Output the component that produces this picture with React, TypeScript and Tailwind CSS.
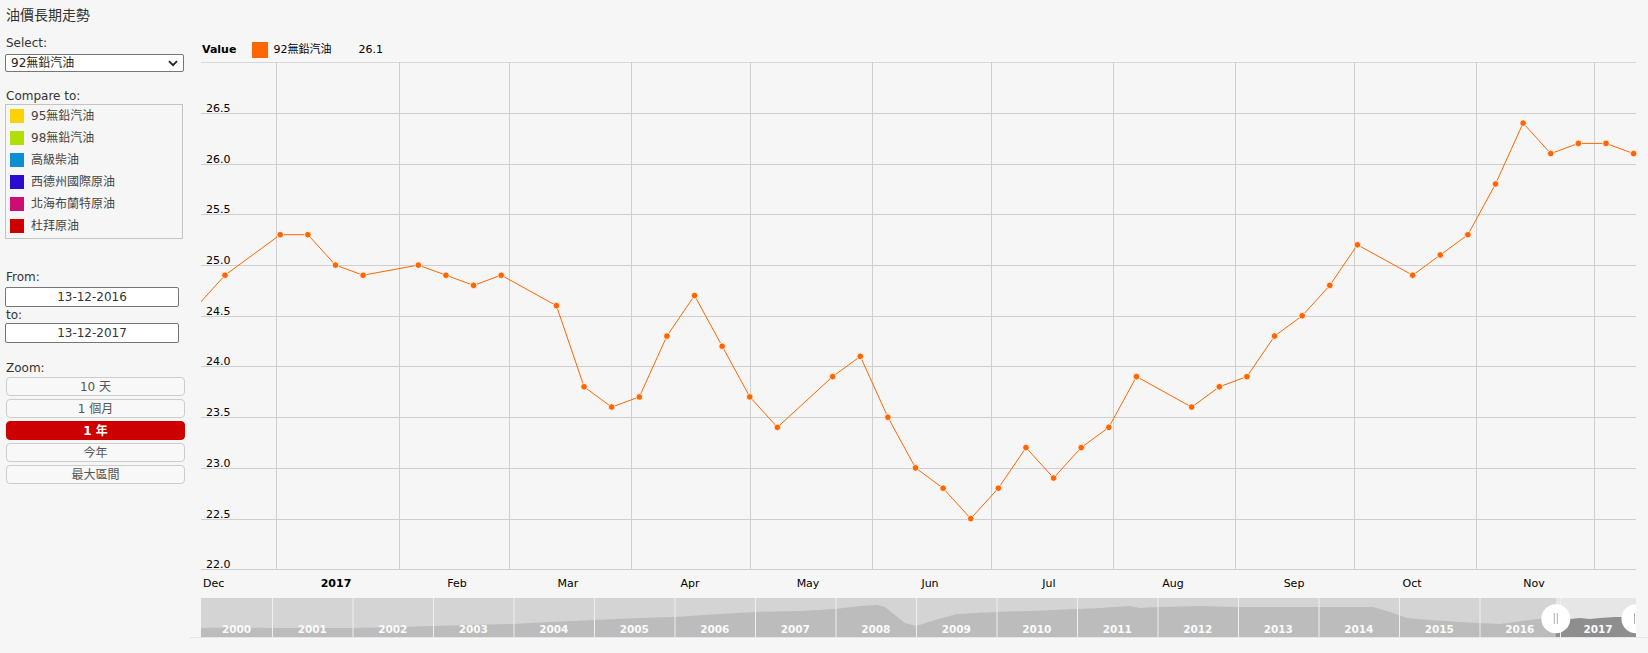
import React from "react";

const pts: [number, number][] = [
  [-1, 24.6], [0, 24.9], [2, 25.3], [3, 25.3], [4, 25.0], [5, 24.9], [7, 25.0], [8, 24.9], [9, 24.8], [10, 24.9],
  [12, 24.6], [13, 23.8], [14, 23.6], [15, 23.7], [16, 24.3], [17, 24.7], [18, 24.2], [19, 23.7], [20, 23.4],
  [22, 23.9], [23, 24.1], [24, 23.5], [25, 23.0], [26, 22.8], [27, 22.5], [28, 22.8], [29, 23.2], [30, 22.9],
  [31, 23.2], [32, 23.4], [33, 23.9], [35, 23.6], [36, 23.8], [37, 23.9], [38, 24.3], [39, 24.5], [40, 24.8],
  [41, 25.2], [43, 24.9], [44, 25.1], [45, 25.3], [46, 25.8], [47, 26.4], [48, 26.1], [49, 26.2], [50, 26.2], [51, 26.1],
];

const PX = (k: number) => 225 + k * 27.62;
const PY = (v: number) => 569.3 - (v - 22) * 101.4;

const gridVals = [22.0, 22.5, 23.0, 23.5, 24.0, 24.5, 25.0, 25.5, 26.0, 26.5];
const monthLines = [276.3, 398.6, 509, 631.4, 749.8, 872, 990.5, 1112.9, 1235.2, 1353.6, 1475.9, 1594.3];
const monthLabels: { t: string; x: number; start?: boolean; bold?: boolean }[] = [
  { t: "Dec", x: 203, start: true },
  { t: "2017", x: 336, bold: true },
  { t: "Feb", x: 457 },
  { t: "Mar", x: 568 },
  { t: "Apr", x: 690 },
  { t: "May", x: 808 },
  { t: "Jun", x: 930 },
  { t: "Jul", x: 1049 },
  { t: "Aug", x: 1173 },
  { t: "Sep", x: 1294 },
  { t: "Oct", x: 1412 },
  { t: "Nov", x: 1534 },
];

const navArea: [number, number][] = [
  [201, 628], [230, 627.5], [272, 628], [320, 628], [352, 628], [400, 627], [433, 626], [470, 625], [513, 624],
  [550, 622], [594, 620], [640, 618], [674, 617], [720, 614], [755, 612], [800, 611], [835, 609], [860, 606],
  [877, 605], [885, 607], [895, 615], [905, 623], [916, 626], [935, 620], [957, 614], [996, 612], [1030, 611],
  [1077, 609], [1100, 608], [1130, 606], [1140, 608], [1157, 607], [1200, 606], [1238, 607], [1280, 607],
  [1318, 607], [1373, 607], [1390, 612], [1407, 618], [1430, 620], [1460, 622], [1479, 623], [1500, 624],
  [1530, 620], [1545, 618], [1560, 617], [1570, 619], [1580, 618], [1590, 619], [1600, 618], [1615, 617], [1636, 617],
];

const years = Array.from({ length: 18 }, (_, i) => 2000 + i);
const yearStart = (i: number) => (i === 0 ? 201 : 272 + (i - 1) * 80.5);
const yearEnd = (i: number) => (i === 17 ? 1636 : 272 + i * 80.5);

const compare = [
  { c: "bg-[#fcd202]", t: "95無鉛汽油" },
  { c: "bg-[#b0de09]", t: "98無鉛汽油" },
  { c: "bg-[#0d8ecf]", t: "高級柴油" },
  { c: "bg-[#2a0cd0]", t: "西德州國際原油" },
  { c: "bg-[#cd0d74]", t: "北海布蘭特原油" },
  { c: "bg-[#cc0000]", t: "杜拜原油" },
];

const zooms = ["10 天", "1 個月", "1 年", "今年", "最大區間"];

function Chart() {
  const line = pts.map(([k, v]) => `${PX(k).toFixed(1)},${PY(v).toFixed(1)}`).join(" ");
  return (
    <svg width={1458} height={536} viewBox="190 62 1458 536" className="block">
      <defs>
        <clipPath id="plotclip">
          <rect x={201} y={62} width={1435} height={508} />
        </clipPath>
      </defs>
      <line x1={201} x2={1636} y1={62.5} y2={62.5} stroke="#d8d8d8" strokeWidth={1} />
      {monthLines.map((x) => (
        <line key={x} x1={Math.round(x) + 0.5} x2={Math.round(x) + 0.5} y1={62} y2={569.5} stroke="#cfcfcf" strokeWidth={1} />
      ))}
      {gridVals.map((v) => (
        <line key={v} x1={201} x2={1636} y1={Math.round(PY(v)) + 0.5} y2={Math.round(PY(v)) + 0.5} stroke="#cfcfcf" strokeWidth={1} />
      ))}
      {gridVals.map((v) => (
        <text key={"l" + v} x={206} y={Math.round(PY(v)) - 1} fontSize={11} fill="#000">
          {v.toFixed(1)}
        </text>
      ))}
      {monthLabels.map((m) => (
        <text
          key={m.t}
          x={m.x}
          y={587}
          fontSize={11}
          fill="#000"
          textAnchor={m.start ? "start" : "middle"}
          fontWeight={m.bold ? "bold" : "normal"}
        >
          {m.t}
        </text>
      ))}
      <g clipPath="url(#plotclip)">
        <polyline points={line} fill="none" stroke="#ff6600" strokeWidth={1} />
      </g>
      {pts
        .filter(([k]) => k >= 0)
        .map(([k, v]) => (
          <circle key={k} cx={PX(k)} cy={PY(v)} r={3.3} fill="#ff6600" stroke="#ffffff" strokeWidth={0.8} />
        ))}
    </svg>
  );
}

function Navigator() {
  const area =
    navArea.map(([x, y], i) => `${i === 0 ? "M" : "L"}${x},${y}`).join(" ") + " L1636,637 L201,637 Z";
  const selX = 1555.8;
  return (
    <svg width={1435} height={39} viewBox="201 598 1435 39" className="block overflow-hidden">
      <defs>
        <clipPath id="selclip">
          <rect x={selX} y={598} width={1636 - selX} height={39} />
        </clipPath>
      </defs>
      <rect x={201} y={598} width={1435} height={39} fill="#d4d4d4" />
      <path d={area} fill="#bcbcbc" />
      <g clipPath="url(#selclip)">
        <rect x={selX} y={598} width={1636 - selX} height={39} fill="#e6e6e6" />
        <path d={area} fill="#8e8e8e" />
      </g>
      {years.slice(1).map((_, i) => (
        <line key={i} x1={yearStart(i + 1) + 0.5} x2={yearStart(i + 1) + 0.5} y1={598} y2={637} stroke="#efefef" strokeWidth={1} />
      ))}
      {years.map((y, i) => (
        <text
          key={y}
          x={(yearStart(i) + yearEnd(i)) / 2}
          y={633}
          fontSize={10.5}
          fontWeight="bold"
          fill="#fafafa"
          textAnchor="middle"
        >
          {y}
        </text>
      ))}
      <circle cx={selX} cy={618.7} r={14.5} fill="#ffffff" />
      <line x1={selX - 1.5} x2={selX - 1.5} y1={613} y2={624} stroke="#b0b0b0" strokeWidth={1} />
      <line x1={selX + 1.5} x2={selX + 1.5} y1={613} y2={624} stroke="#b0b0b0" strokeWidth={1} />
      <circle cx={1636} cy={618.7} r={14.5} fill="#ffffff" />
      <line x1={1634.5} x2={1634.5} y1={613} y2={624} stroke="#b0b0b0" strokeWidth={1} />
    </svg>
  );
}

export default function App() {
  return (
    <div className="flex h-[653px] w-[1648px] overflow-hidden bg-[#f6f6f6] font-['DejaVu_Sans','Noto_Sans_CJK_TC',sans-serif] text-[#333]">
      {/* Left panel */}
      <div className="flex w-[190px] shrink-0 flex-col pl-[5px]">
        <div className="mt-[5px] h-[20px] pl-[1px] text-[14px] leading-[20px] text-[#333]">油價長期走勢</div>
        <div className="mt-[10px] h-[16px] pl-[1px] text-[12px] leading-[16px]">Select:</div>
        <div className="mt-[3px] flex h-[18px] w-[179px] items-center justify-between rounded-[2px] border border-[#767676] bg-white pl-[5px] pr-[5px] text-[12px] text-[#222]">
          <span>92無鉛汽油</span>
          <svg width="10" height="7" viewBox="0 0 10 7">
            <path d="M1 1.2 L5 5.2 L9 1.2" fill="none" stroke="#222" strokeWidth="1.8" />
          </svg>
        </div>
        <div className="mt-[16px] h-[16px] pl-[1px] text-[12px] leading-[16px]">Compare to:</div>
        <div className="flex h-[135px] w-[178px] flex-col border border-[#c4c4c4] pl-[4px]">
          {compare.map((c) => (
            <div key={c.t} className="flex h-[22px] items-center">
              <div className={`h-[14px] w-[14px] ${c.c}`} />
              <span className="ml-[7px] text-[12px] text-[#444]">{c.t}</span>
            </div>
          ))}
        </div>
        <div className="mt-[30px] h-[16px] pl-[1px] text-[12px] leading-[16px]">From:</div>
        <div className="mt-[2px] flex h-[20px] w-[174px] items-center justify-center rounded-[2px] border border-[#767676] bg-white text-[12px] text-[#333]">
          13-12-2016
        </div>
        <div className="h-[16px] pl-[1px] text-[12px] leading-[16px]">to:</div>
        <div className="flex h-[20px] w-[174px] items-center justify-center rounded-[2px] border border-[#767676] bg-white text-[12px] text-[#333]">
          13-12-2017
        </div>
        <div className="mt-[17px] h-[16px] pl-[1px] text-[12px] leading-[16px]">Zoom:</div>
        <div className="ml-[1px] mt-[1px] flex w-[179px] flex-col gap-[3px]">
          {zooms.map((z) =>
            z === "1 年" ? (
              <div
                key={z}
                className="flex h-[19px] items-center justify-center rounded-[4px] border border-[#cc0000] bg-[#cc0000] text-[12px] font-bold text-white"
              >
                {z}
              </div>
            ) : (
              <div
                key={z}
                className="flex h-[19px] items-center justify-center rounded-[4px] border border-[#cccccc] bg-[#f8f8f8] text-[12px] text-[#555]"
              >
                {z}
              </div>
            )
          )}
        </div>
      </div>

      {/* Chart column */}
      <div className="flex w-[1458px] flex-col pt-[38px]">
        <div className="flex h-[24px] items-center pl-[12px] text-[11px] text-black">
          <span className="font-bold">Value</span>
          <div className="ml-[16px] h-[16px] w-[16px] bg-[#ff6600]" />
          <span className="ml-[5px]">92無鉛汽油</span>
          <span className="ml-[27px]">26.1</span>
        </div>
        <Chart />
        <div className="border-b border-[#e6e6e6] pl-[11px]">
          <Navigator />
        </div>
      </div>
    </div>
  );
}
